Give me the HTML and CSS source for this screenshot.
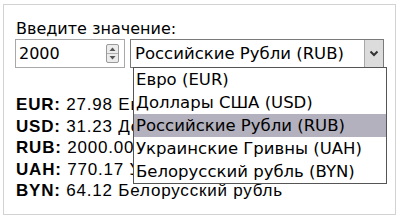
FILE: index.html
```html
<!DOCTYPE html>
<html lang="ru">
<head>
    <meta charset="UTF-8">
    <title>Конвертер валют</title>
    <link rel="stylesheet" href="styles.css">
</head>
<body>
    <div class="converter">
        <div class="label">Введите значение:</div>

        <div class="form-row">
            <div class="amount">
                <span class="amount-value">2000</span>
                <svg class="spin" width="13" height="19" viewBox="0 0 13 19">
                    <rect x="0.5" y="0.5" width="12" height="18" rx="1.5" fill="#ececec" stroke="#9a9a9a"/>
                    <line x1="1" y1="9.5" x2="12" y2="9.5" stroke="#b0b0b0"/>
                    <path d="M3.5 7 L6.5 3.5 L9.5 7 Z" fill="#555"/>
                    <path d="M3.5 12 L6.5 15.5 L9.5 12 Z" fill="#555"/>
                </svg>
            </div>

            <div class="select">
                <span class="select-value">Российские Рубли (RUB)</span>
                <div class="select-btn">
                    <svg width="10" height="7" viewBox="0 0 10 7">
                        <path d="M1.5 1.5 L5 5 L8.5 1.5" fill="none" stroke="#333" stroke-width="2"/>
                    </svg>
                </div>

                <!-- open list -->
                <ul class="options">
                    <li>Евро (EUR)</li>
                    <li>Доллары США (USD)</li>
                    <li class="selected">Российские Рубли (RUB)</li>
                    <li>Украинские Гривны (UAH)</li>
                    <li>Белорусский рубль (BYN)</li>
                </ul>
            </div>
        </div>

        <div class="results">
            <div><b>EUR:</b> 27.98 Евро</div>
            <div><b>USD:</b> 31.23 Доллары США</div>
            <div><b>RUB:</b> 2000.00 Российские Рубли</div>
            <div><b>UAH:</b> 770.17 Украинские Гривны</div>
            <div><b>BYN:</b> 64.12 Белорусский рубль</div>
        </div>
    </div>
</body>
</html>
```

FILE: styles.css
```css
html, body {
    margin: 0;
    padding: 0;
    background-color: #fff;
    font-family: "Liberation Sans", Arial, sans-serif;
    color: #000;
}

.converter {
    box-sizing: border-box;
    width: 393px;
    height: 211px;
    margin: 4px 0 0 3px;
    padding: 14px 11px 0 11px;
    border: 1px solid #d2d2d2;
}

.label {
    font-family: "DejaVu Sans", sans-serif;
    font-size: 16px;
    line-height: 20px;
    padding-left: 1px;
}

.form-row {
    display: flex;
    gap: 5px;
}

.amount {
    box-sizing: border-box;
    width: 110px;
    height: 29px;
    border: 1px solid #a8a8a8;
    display: flex;
    align-items: center;
    justify-content: space-between;
    padding: 0 5px 0 3px;
    font-family: "DejaVu Sans", sans-serif;
    font-size: 16px;
}

.spin {
    display: block;
}

.select {
    position: relative;
    box-sizing: border-box;
    width: 254px;
    height: 29px;
    border: 1px solid #7a7a7a;
    display: flex;
    align-items: center;
    justify-content: space-between;
    padding-left: 4px;
    font-family: "DejaVu Sans", sans-serif;
    font-size: 16.5px;
}

.select-btn {
    box-sizing: border-box;
    width: 19px;
    height: 27px;
    background-color: #dcdcdc;
    border-left: 1px solid #a8a8a8;
    display: flex;
    align-items: center;
    justify-content: center;
}

.options {
    position: absolute;
    top: 27px;
    left: 2px;
    width: 252px;
    margin: 0;
    padding: 0;
    list-style: none;
    background-color: #fff;
    border: 1px solid #555;
    z-index: 10;
}

    .options li {
        height: 23px;
        line-height: 23px;
        padding-left: 2px;
        white-space: nowrap;
    }

    .options li.selected {
        background-color: #b2b1bd;
    }

.results {
    margin-top: 26px;
    font-size: 17px;
    letter-spacing: 0.8px;
    line-height: 21.5px;
    padding-left: 1px;
    white-space: nowrap;
}
```
